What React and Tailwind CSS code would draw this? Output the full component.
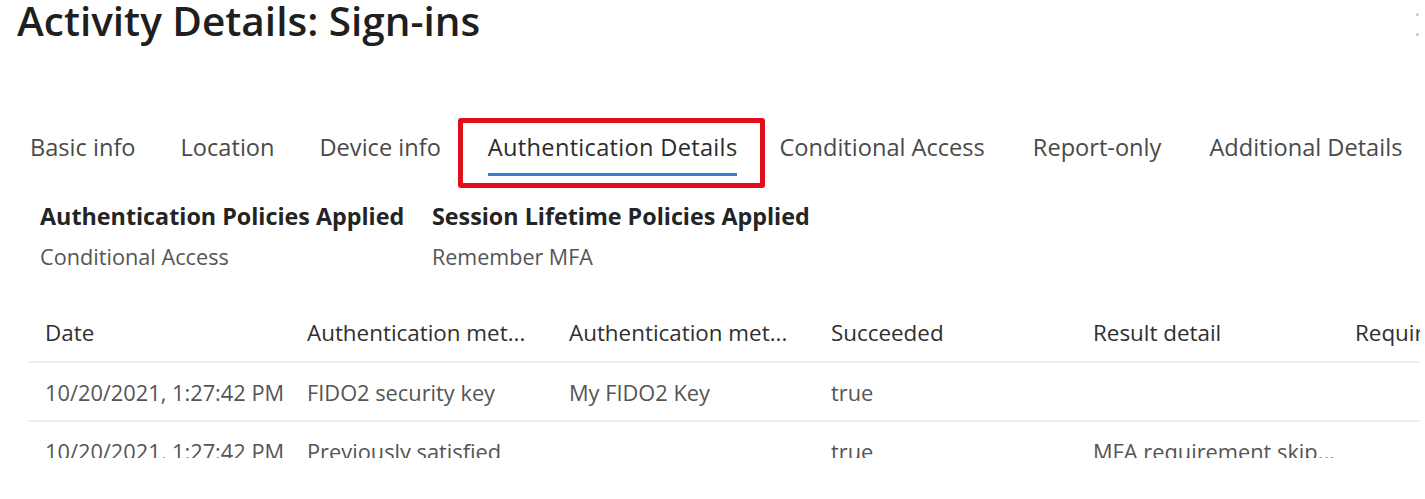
export default function App() {
  const tabs = [
    { t: "Basic info", ml: "ml-0" },
    { t: "Location", ml: "ml-[45px]" },
    { t: "Device info", ml: "ml-[45px]" },
    { t: "Authentication Details", ml: "ml-[47px]", active: true },
    { t: "Conditional Access", ml: "ml-[42px]" },
    { t: "Report-only", ml: "ml-[48px]" },
    { t: "Additional Details", ml: "ml-[48px]" },
  ];
  const cols = ["Date", "Authentication met...", "Authentication met...", "Succeeded", "Result detail", "Requirement"];
  const rows = [
    ["10/20/2021, 1:27:42 PM", "FIDO2 security key", "My FIDO2 Key", "true", "", ""],
    ["10/20/2021, 1:27:42 PM", "Previously satisfied", "", "true", "MFA requirement skip...", ""],
  ];
  return (
    <div className="relative w-[1425px] h-[499px] overflow-hidden bg-white font-['Open_Sans','Noto_Sans',sans-serif]">
      <div className="absolute left-[1416px] top-[13px] w-[3px] h-[3px] rounded-full bg-[#c8c8c8]" />
      <div className="absolute left-[1416px] top-[33px] w-[3px] h-[3px] rounded-full bg-[#c8c8c8]" />

      <h1 className="pl-[17px] text-[40.5px] leading-[42px] font-semibold text-[#1f1f1f] whitespace-nowrap">
        Activity Details: Sign-ins
      </h1>

      <div className="mt-[91px] flex pl-[30px]">
        {tabs.map(({ t, ml, active }) => (
          <div key={t} className={`relative flex flex-col ${ml}`}>
            <span className={`text-[23.6px] leading-[28px] whitespace-nowrap ${active ? "text-[#2b2b2b] tracking-[0.3px]" : "text-[#4a4a4a]"}`}>{t}</span>
            <div className={`mt-[12px] h-[3px] ${active ? "bg-[#2f80d1]" : "bg-transparent"}`} />
            {active && (
              <div className="absolute -left-[30px] -right-[28px] -top-[15px] -bottom-[12px] rounded-[3px] border-[5px] border-[#e10f1c]" />
            )}
          </div>
        ))}
      </div>

      <div className="mt-[26px] grid grid-cols-[392px_auto] pl-[40px]">
        <div>
          <div className="text-[23.3px] leading-[28px] font-bold text-[#242424] whitespace-nowrap">Authentication Policies Applied</div>
          <div className="mt-[13px] text-[21.7px] leading-[28px] text-[#555] whitespace-nowrap">Conditional Access</div>
        </div>
        <div>
          <div className="text-[23.3px] leading-[28px] font-bold text-[#242424] whitespace-nowrap">Session Lifetime Policies Applied</div>
          <div className="mt-[13px] text-[21.5px] leading-[28px] text-[#555] whitespace-nowrap">Remember MFA</div>
        </div>
      </div>

      <div className="mt-[33px] ml-[28px] w-[1392px] h-[154px] overflow-hidden">
        <div className="grid grid-cols-[repeat(6,262px)] h-[59px] items-center border-b-2 border-[#ededed] w-max">
          {cols.map((c, i) => (
            <div key={i} className="pl-[17px] text-[22.4px] leading-[28px] text-[#303030] whitespace-nowrap">{c}</div>
          ))}
        </div>
        {rows.map((r, ri) => (
          <div key={ri} className="grid grid-cols-[repeat(6,262px)] h-[59px] items-center border-b-2 border-[#ededed] w-max">
            {r.map((c, i) => (
              <div key={i} className="pl-[17px] pt-[2px] text-[21.8px] leading-[28px] text-[#555] whitespace-nowrap">{c}</div>
            ))}
          </div>
        ))}
      </div>
    </div>
  );
}
